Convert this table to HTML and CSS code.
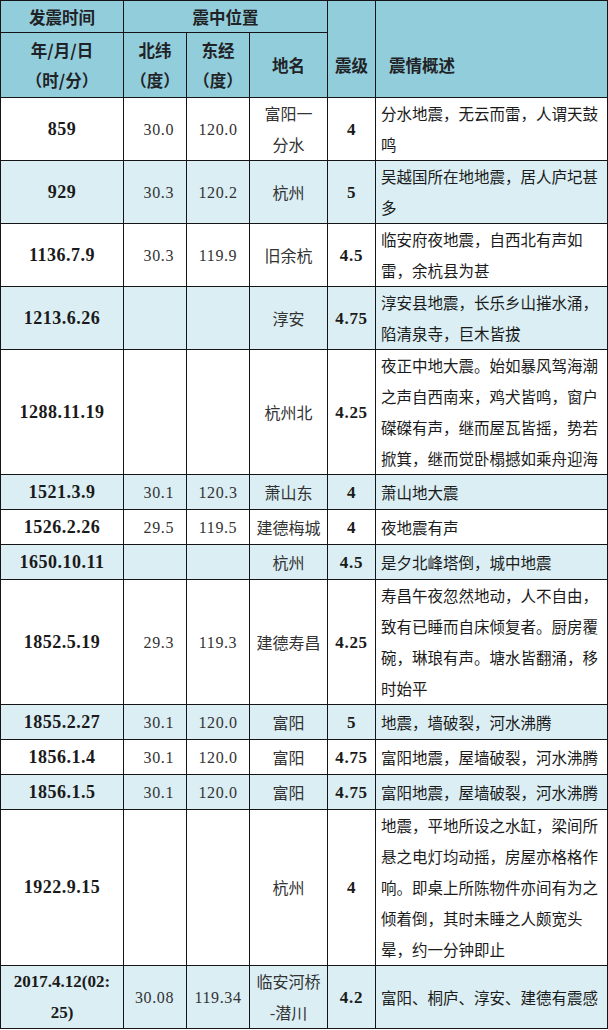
FILE: index.html
```html
<!DOCTYPE html>
<html lang="zh-CN">
<head>
<meta charset="utf-8">
<title>杭州历史地震</title>
<link rel="stylesheet" href="styles.css">
</head>
<body>
<table class="quake">
  <colgroup>
    <col class="c-date">
    <col class="c-lat">
    <col class="c-lon">
    <col class="c-place">
    <col class="c-mag">
    <col class="c-desc">
  </colgroup>
  <thead>
    <tr class="hr1">
      <th>发震时间</th>
      <th colspan="3">震中位置</th>
      <th rowspan="2" class="th-low">震级</th>
      <th rowspan="2" class="th-low th-desc">震情概述</th>
    </tr>
    <tr class="hr2">
      <th>年/月/日<br>（时/分）</th>
      <th>北纬<br>（度）</th>
      <th>东经<br>（度）</th>
      <th>地名</th>
    </tr>
  </thead>
  <tbody>
    <tr>
      <td class="date">859</td><td class="lat">30.0</td><td class="lon">120.0</td><td class="place">富阳一<br>分水</td><td class="mag">4</td>
      <td class="desc">分水地震，无云而雷，人谓天鼓鸣</td>
    </tr>
    <tr class="alt">
      <td class="date">929</td><td class="lat">30.3</td><td class="lon">120.2</td><td class="place">杭州</td><td class="mag">5</td>
      <td class="desc">吴越国所在地地震，居人庐圮甚多</td>
    </tr>
    <tr>
      <td class="date">1136.7.9</td><td class="lat">30.3</td><td class="lon">119.9</td><td class="place">旧余杭</td><td class="mag">4.5</td>
      <td class="desc">临安府夜地震，自西北有声如雷，余杭县为甚</td>
    </tr>
    <tr class="alt">
      <td class="date">1213.6.26</td><td class="lat"></td><td class="lon"></td><td class="place">淳安</td><td class="mag">4.75</td>
      <td class="desc">淳安县地震，长乐乡山摧水涌，陷清泉寺，巨木皆拔</td>
    </tr>
    <tr>
      <td class="date">1288.11.19</td><td class="lat"></td><td class="lon"></td><td class="place">杭州北</td><td class="mag">4.25</td>
      <td class="desc">夜正中地大震。始如暴风驾海潮之声自西南来，鸡犬皆鸣，窗户磔磔有声，继而屋瓦皆摇，势若掀箕，继而觉卧榻撼如乘舟迎海</td>
    </tr>
    <tr class="alt one">
      <td class="date">1521.3.9</td><td class="lat">30.1</td><td class="lon">120.3</td><td class="place">萧山东</td><td class="mag">4</td>
      <td class="desc">萧山地大震</td>
    </tr>
    <tr class="one">
      <td class="date">1526.2.26</td><td class="lat">29.5</td><td class="lon">119.5</td><td class="place">建德梅城</td><td class="mag">4</td>
      <td class="desc">夜地震有声</td>
    </tr>
    <tr class="alt one">
      <td class="date">1650.10.11</td><td class="lat"></td><td class="lon"></td><td class="place">杭州</td><td class="mag">4.5</td>
      <td class="desc">是夕北峰塔倒，城中地震</td>
    </tr>
    <tr>
      <td class="date">1852.5.19</td><td class="lat">29.3</td><td class="lon">119.3</td><td class="place">建德寿昌</td><td class="mag">4.25</td>
      <td class="desc">寿昌午夜忽然地动，人不自由，致有已睡而自床倾复者。厨房覆碗，琳琅有声。塘水皆翻涌，移时始平</td>
    </tr>
    <tr class="alt one">
      <td class="date">1855.2.27</td><td class="lat">30.1</td><td class="lon">120.0</td><td class="place">富阳</td><td class="mag">5</td>
      <td class="desc">地震，墙破裂，河水沸腾</td>
    </tr>
    <tr class="one">
      <td class="date">1856.1.4</td><td class="lat">30.1</td><td class="lon">120.0</td><td class="place">富阳</td><td class="mag">4.75</td>
      <td class="desc">富阳地震，屋墙破裂，河水沸腾</td>
    </tr>
    <tr class="alt one">
      <td class="date">1856.1.5</td><td class="lat">30.1</td><td class="lon">120.0</td><td class="place">富阳</td><td class="mag">4.75</td>
      <td class="desc">富阳地震，屋墙破裂，河水沸腾</td>
    </tr>
    <tr>
      <td class="date">1922.9.15</td><td class="lat"></td><td class="lon"></td><td class="place">杭州</td><td class="mag">4</td>
      <td class="desc">地震，平地所设之水缸，梁间所悬之电灯均动摇，房屋亦格格作响。即桌上所陈物件亦间有为之倾着倒，其时未睡之人颇宽头晕，约一分钟即止</td>
    </tr>
    <tr class="alt">
      <td class="date long">2017.4.12(02:<br>25)</td><td class="lat">30.08</td><td class="lon">119.34</td><td class="place">临安河桥<br>-潜川</td><td class="mag">4.2</td>
      <td class="desc">富阳、桐庐、淳安、建德有震感</td>
    </tr>
  </tbody>
</table>
</body>
</html>
```

FILE: styles.css
```css
html, body {
  margin: 0;
  padding: 0;
  background: #ffffff;
}

.quake {
  border-collapse: collapse;
  table-layout: fixed;
  width: 607px;
  font-family: "Noto Sans CJK SC", "Liberation Sans", sans-serif;
  color: #1b1b1b;
}

.c-date { width: 123px; }
.c-lat { width: 63px; }
.c-lon { width: 63px; }
.c-place { width: 78px; }
.c-mag { width: 48px; }
.c-desc { width: 232px; }

.quake th,
.quake td {
  border: 1px solid #151515;
  padding: 0;
  vertical-align: middle;
  text-align: center;
}

.quake th {
  background: #92cddc;
  font-size: 16.5px;
  font-weight: 700;
  line-height: 30px;
  color: #1f2326;
}

.hr1 th {
  height: 31px;
}

.hr2 th {
  height: 64px;
}

.quake th.th-low {
  vertical-align: bottom;
  padding-bottom: 17px;
}

.quake th.th-desc {
  text-align: left;
  padding-left: 13px;
}

.quake td {
  line-height: 31px;
  background: #ffffff;
}

.quake tr.alt td {
  background: #daeef3;
}

.quake tr.one td {
  height: 34px;
}

.date {
  font-family: "Liberation Serif", "DejaVu Serif", serif;
  font-weight: 700;
  font-size: 18px;
  letter-spacing: 0.5px;
  white-space: nowrap;
  color: #1a1a1a;
}

.date.long {
  letter-spacing: 0;
  font-size: 17px;
}

.lat,
.lon {
  font-family: "Liberation Serif", "DejaVu Serif", serif;
  font-size: 16px;
  letter-spacing: 0.6px;
  color: #333333;
}

.quake td.lat {
  text-align: right;
  padding-right: 12px;
}

.place {
  font-size: 16px;
  color: #333333;
}

.mag {
  font-family: "Liberation Serif", "DejaVu Serif", serif;
  font-weight: 700;
  font-size: 17px;
  letter-spacing: 0.7px;
  color: #1a1a1a;
}

.quake td.desc {
  text-align: left;
  padding-left: 5px;
  padding-right: 2px;
  font-size: 15.5px;
  color: #1b1b1b;
}
```
